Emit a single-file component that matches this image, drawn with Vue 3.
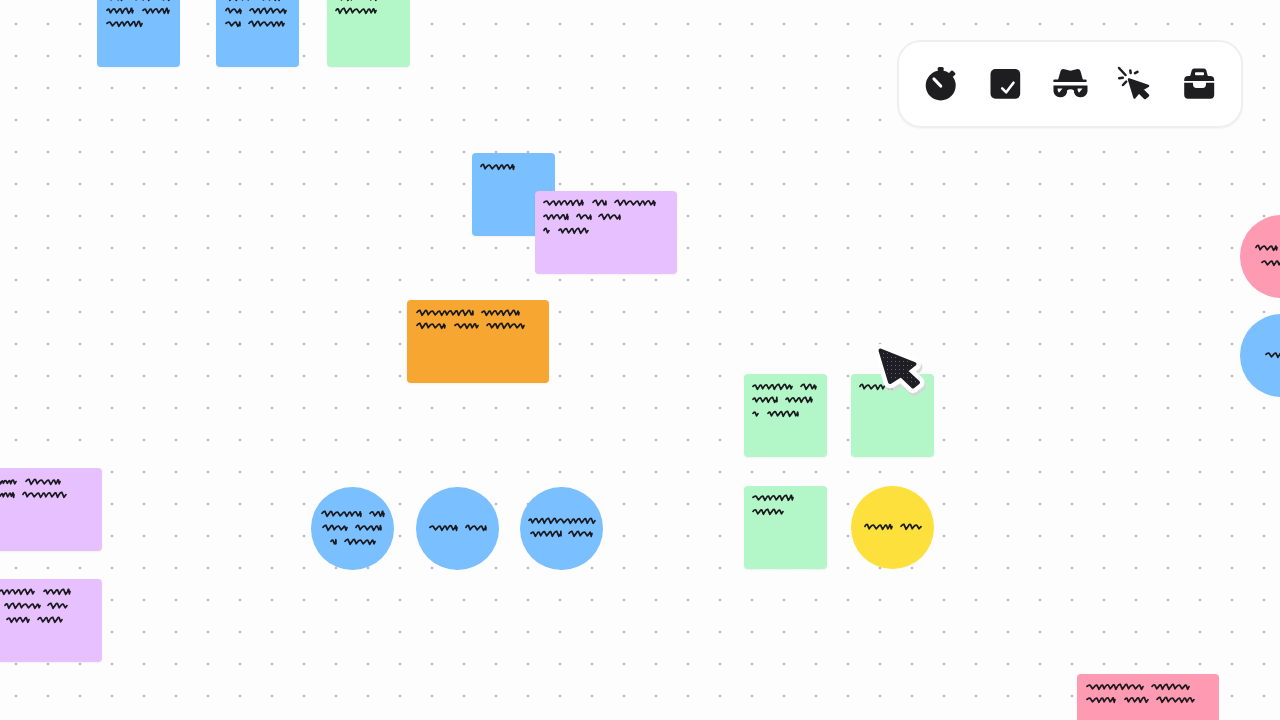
<script setup>
const square = 82.5
const wide = 141.5

// Each line is [y, [x0, x1], [x0, x1] ...] in canvas coordinates.
const notes = [
  { x: 97, y: -16, w: square + 0.5, color: 'blue', lines: [[-2, [107, 122], [132, 150], [158, 170]], [11, [107, 133], [143, 169]], [24, [107, 142]]] },
  { x: 216, y: -16, w: square + 0.5, color: 'blue', lines: [[-2, [226, 250], [260, 280]], [11, [226, 241], [250, 286]], [24, [226, 240], [249, 284]]] },
  { x: 327, y: -16, w: square, color: 'green', lines: [[-2, [336, 352], [366, 377]], [11, [336, 376]]] },
  { x: 472, y: 153, w: square + 0.5, color: 'blue', lines: [[167, [481, 514]]] },
  { x: 535, y: 191, w: wide, color: 'purple', lines: [[203, [544, 583], [593, 606], [615, 655]], [217, [544, 568], [577, 591], [599, 620]], [231, [544, 549], [559, 588]]] },
  { x: 407, y: 300, w: wide, color: 'orange', lines: [[313, [417, 473], [482, 519]], [326, [417, 445], [455, 478], [487, 524]]] },
  { x: 744, y: 374, w: square, color: 'green', lines: [[387, [753, 792], [801, 816]], [400, [753, 777], [786, 812]], [414, [753, 758], [768, 798]]] },
  { x: 851, y: 374, w: square, color: 'green', lines: [[387, [860, 892]]] },
  { x: 744, y: 486, w: square, color: 'green', lines: [[498, [753, 793]], [512, [753, 783]]] },
  { x: 851, y: 486, w: square, color: 'yellow', round: true, lines: [[527, [865, 892], [901, 921]]] },
  { x: 311, y: 487, w: square, color: 'blue', round: true, lines: [[514, [322, 361], [370, 384]], [528, [323, 347], [356, 381]], [542, [331, 336], [345, 375]]] },
  { x: 416, y: 487, w: square, color: 'blue', round: true, lines: [[528, [430, 457], [466, 486]]] },
  { x: 520, y: 487, w: square, color: 'blue', round: true, lines: [[521, [529, 595]], [534, [531, 561], [569, 592]]] },
  { x: 1240, y: 215, w: square, color: 'pink', round: true, lines: [[248, [1256, 1277]], [263, [1262, 1290]]] },
  { x: 1240, y: 314, w: square, color: 'blue', round: true, lines: [[355, [1266, 1290]]] },
  { x: -40, y: 468, w: wide, color: 'purple', lines: [[482, [-20, 16], [26, 60]], [495, [-20, 14], [23, 66]]] },
  { x: -40, y: 579, w: wide, color: 'purple', lines: [[592, [-20, 34], [44, 70]], [606, [5, 40], [48, 67]], [620, [7, 29], [38, 62]]] },
  { x: 1077, y: 674, w: wide, color: 'pink', lines: [[687, [1087, 1143], [1152, 1189]], [700, [1087, 1115], [1125, 1148], [1157, 1194]]] }
]

// Hand-written squiggle: a slanted wave whose period and height vary a little.
function squiggle(note) {
  let d = ''
  for (const [y, ...words] of note.lines) {
    const base = y - note.y
    for (const [a, b] of words) {
      const end = b - note.x
      let x = a - note.x
      let i = 0
      d += `M${x} ${base - 0.6}`
      while (x < end) {
        const seed = (a * 7 + b * 3 + i * 11) % 7
        const step = Math.min(4.8 + seed * 0.45, end - x)
        const high = base - 1.7 - (seed % 3) * 0.45
        const low = base + 1.8 + (seed % 2) * 0.5
        d += `Q${(x + step * 0.22).toFixed(1)} ${(high - 0.6).toFixed(1)} ${(x + step * 0.42).toFixed(1)} ${high.toFixed(1)}`
        d += `L${(x + step * 0.72).toFixed(1)} ${low.toFixed(1)}`
        d += `L${(x + step).toFixed(1)} ${(base - 0.4).toFixed(1)}`
        x += step
        i++
      }
    }
  }
  return d
}

const items = notes.map((note) => ({
  ...note,
  d: squiggle(note),
  style: { left: note.x + 'px', top: note.y + 'px', width: note.w + 'px' }
}))
</script>

<template>
  <main class="board">
    <div
      v-for="(note, i) in items"
      :key="i"
      class="note"
      :class="[note.color, { round: note.round }]"
      :style="note.style"
    >
      <svg class="scribble" :width="note.w" height="82" fill="none">
        <path :d="note.d" />
      </svg>
    </div>

    <svg class="cursor" width="60" height="60" viewBox="0 0 60 60">
      <defs>
        <pattern id="dither" width="4" height="4" patternUnits="userSpaceOnUse">
          <rect x="1" y="1" width="1" height="1" fill="#5c6674" />
        </pattern>
      </defs>
      <path class="cursor-shadow" d="M10.500 10.500 44.500 24 35.500 31 48 42.500 43 46.500 31 35 20 42Z" />
      <path class="cursor-edge" d="M10.500 10.500 44.500 24 35.500 31 48 42.500 43 46.500 31 35 20 42Z" />
      <path class="cursor-fill" d="M10.500 10.500 44.500 24 35.500 31 48 42.500 43 46.500 31 35 20 42Z" />
      <path class="cursor-dots" d="M10.500 10.500 44.500 24 35.500 31 48 42.500 43 46.500 31 35 20 42Z" />
    </svg>

    <nav class="toolbar">
      <svg class="icon" viewBox="0 0 32 32">
        <circle cx="15.7" cy="17.5" r="15" />
        <rect x="12.700" y="-1" width="6" height="4.500" rx="1.500" />
        <rect x="24.500" y="3" width="5.500" height="5" rx="1.200" transform="rotate(45 27 5.500)" />
        <path class="cut" d="M9 11 15.700 18" />
      </svg>
      <svg class="icon shift" viewBox="0 0 32 32">
        <rect x="1.500" y="1" width="29.700" height="29.700" rx="5" />
        <path class="tick" d="M13.200 20.300 17.200 24.300 24.500 14.700" />
      </svg>
      <svg class="icon" viewBox="0 0 32 32">
        <path d="M4 12 6.500 3.200Q7.500.5 10.500 1.300L16.500 2.800 22.500 1.300Q25.500.5 26.500 3.200L29 12Z" />
        <rect x="-.7" y="11.500" width="33.400" height="2.600" rx="1.200" />
        <path d="M-.5 17.500H33.500V23.500A7 7 0 0 1 20 24.500V22.500Q16.500 20 13 22.500V24.500A7 7 0 0 1-.5 23.500Z" />
        <path class="glint" d="M3.500 20.500H8.500L5 24.800Q3.500 23.500 3.500 20.500ZM23.500 20.500H28.500L25 24.800Q23.500 23.500 23.500 20.500Z" />
      </svg>
      <svg class="icon" viewBox="0 0 32 32">
        <path class="arrow" d="M11 11.500 30 18 24 21.500 30 27.500 27 30 21 24 16.500 29.500Z" />
        <path class="ray" d="M1 0 7.500 7M12.300 2.500 12.700 5M17 5.200 19.500 3.800M1.200 10.300 4.800 9.700M5 17 8.200 13.700" />
      </svg>
      <svg class="icon" viewBox="0 0 32 32">
        <path d="M7 8.500 8.800 2.200Q9.300.5 11 .5H21Q22.700.5 23.200 2.200L25 8.500Z" />
        <rect x="1.200" y="8" width="30" height="22.700" rx="4" />
        <rect class="hole" x="12" y="4.300" width="9" height="3" rx="1" />
        <path class="hole" d="M1 13H32V14.700H23V16Q23 20 19.500 20H13.500Q10 20 10 16V14.700H1Z" />
      </svg>
    </nav>
  </main>
</template>

<style>
html,
body {
  margin: 0;
  background: #fdfdfd;
}
</style>

<style scoped>
.board {
  position: relative;
  width: 1280px;
  height: 720px;
  overflow: hidden;
  background-color: #fdfdfd;
  background-image: radial-gradient(circle at center, #b8b8ca 0, #b8b8ca 0.9px, rgba(184, 184, 202, 0) 1.7px);
  background-size: 32px 32px;
  background-position: 0 8px;
}

.note {
  position: absolute;
  height: 82.5px;
  border-radius: 4px;
  box-shadow: 0 1px 2px rgba(0, 0, 0, 0.05);
}

.note.round {
  border-radius: 50%;
  box-shadow: none;
}

.blue { background: #7abfff; }
.green { background: #b3f7c9; }
.purple { background: #e6c0ff; }
.orange { background: #f7a631; }
.yellow { background: #fee03c; }
.pink { background: #ff9ab3; }

.scribble {
  display: block;
  overflow: visible;
  filter: blur(0.3px);
}

.scribble path {
  stroke: #1a1a1e;
  stroke-width: 1.7;
  stroke-linejoin: round;
  stroke-linecap: round;
}

.cursor {
  position: absolute;
  left: 870px;
  top: 340px;
  overflow: visible;
}

.cursor path {
  stroke-linejoin: round;
  stroke-linecap: round;
}

.cursor-shadow {
  fill: #d6d6d6;
  stroke: #d6d6d6;
  stroke-width: 13;
  transform: translate(1.5px, 3px);
  opacity: 0.8;
}

.cursor-edge {
  fill: #fff;
  stroke: #fff;
  stroke-width: 13;
}

.cursor-fill {
  fill: #1e1e24;
  stroke: #1e1e24;
  stroke-width: 4;
}

.cursor-dots {
  fill: url(#dither);
}

.toolbar {
  position: absolute;
  left: 897px;
  top: 40px;
  box-sizing: border-box;
  width: 346px;
  height: 88px;
  padding: 0 26px;
  display: flex;
  align-items: center;
  justify-content: space-between;
  background: #fff;
  border: 2px solid #efefef;
  border-radius: 24px;
  box-shadow: 0 1px 2px rgba(0, 0, 0, 0.04);
}

.icon {
  width: 32px;
  height: 32px;
  overflow: visible;
  fill: #1e1e21;
}

.shift {
  margin-left: -1px;
}

.cut {
  fill: none;
  stroke: #fff;
  stroke-width: 3.2;
  stroke-linecap: round;
}

.tick {
  fill: none;
  stroke: #fff;
  stroke-width: 2.600;
  stroke-linecap: round;
  stroke-linejoin: round;
}

.glint,
.hole {
  fill: #fff;
}

.arrow {
  stroke: #1e1e21;
  stroke-width: 2.500;
  stroke-linejoin: round;
}

.ray {
  fill: none;
  stroke: #1e1e21;
  stroke-width: 2.500;
  stroke-linecap: round;
}
</style>
